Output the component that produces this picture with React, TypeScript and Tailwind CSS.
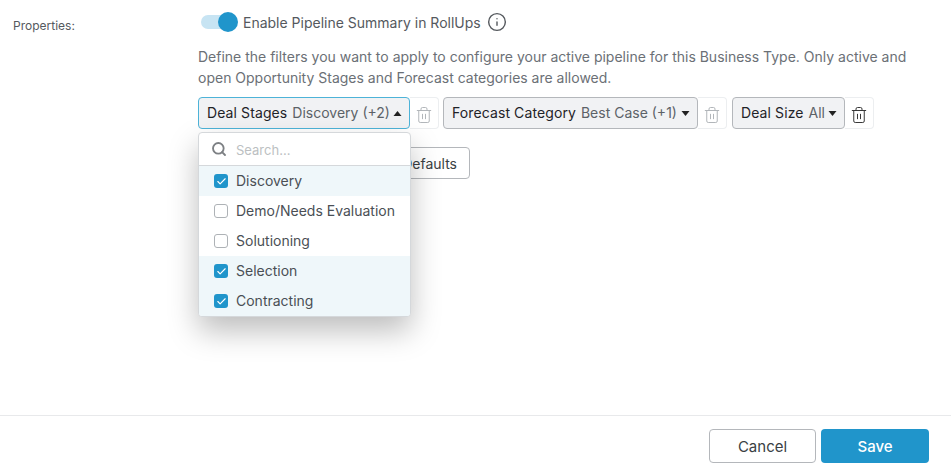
import React from 'react';
import { Check, Search, Trash2, Info } from 'lucide-react';

const stages = [
  { name: 'Discovery', checked: true },
  { name: 'Demo/Needs Evaluation', checked: false },
  { name: 'Solutioning', checked: false },
  { name: 'Selection', checked: true },
  { name: 'Contracting', checked: true },
];

const Caret: React.FC<{ up?: boolean }> = ({ up }) => (
  <svg width="9" height="5" viewBox="0 0 9 5" className={`shrink-0 text-[#222] ${up ? 'rotate-180' : ''}`}>
    <path d="M0.5 0h8L4.5 5z" fill="currentColor" />
  </svg>
);

const FilterChip: React.FC<{ label: string; value: string; className: string; open?: boolean; active?: boolean }> = ({ label, value, className, open, active }) => (
  <div className="flex items-center">
    <div
      className={`h-8 flex items-center pl-2 pr-[7px] justify-between rounded-[4px] border bg-[#f1f2f4] ${className} ${open ? 'border-[#4db3d8]' : 'border-[#b4b7bb]'}`}
    >
      <span className="flex items-center gap-[5px] whitespace-nowrap text-[14px] -mt-[2px]">
        <span className="text-[#1f2328] tracking-[0.1px]">{label}</span>
        <span className="text-[#5c6268]">{value}</span>
      </span>
      <Caret up={open} />
    </div>
    <div className="h-8 w-[29px] pr-[1px] flex items-center justify-center rounded-r-[4px] border border-l-0 border-[#eceef0] bg-white">
      <Trash2 size={18} strokeWidth={1.3} className={`mt-[3px] ${active ? 'text-[#333]' : 'text-[#b0b4b8]'}`} />
    </div>
  </div>
);

const StageRow: React.FC<{ name: string; checked: boolean }> = ({ name, checked }) => (
  <div className={`h-[30px] flex items-center pl-[15px] gap-[8px] ${checked ? 'bg-[#eff7fa]' : 'bg-white'}`}>
    {checked ? (
      <span className="w-[14px] h-[14px] rounded-[3px] bg-[#2095cb] flex items-center justify-center">
        <Check size={11} strokeWidth={2.5} className="text-white" />
      </span>
    ) : (
      <span className="w-[14px] h-[14px] rounded-[3px] border border-[#aeb2b6] bg-white" />
    )}
    <span className="text-[14px] text-[#4a4f55] whitespace-nowrap -mt-[2px]">{name}</span>
  </div>
);

export default function App() {
  return (
    <div className="w-[951px] h-[473px] flex flex-col bg-white overflow-hidden font-['Inter',sans-serif]">
      <div className="h-[415px] flex">
        <div className="w-[198px] pl-[13px] pt-[18px] text-[12px] leading-[15px] text-[#55595e]">Properties:</div>
        <div className="flex-1 pt-[12px] flex flex-col items-start">
          <div className="flex items-center h-5">
            <div className="relative w-9 h-[14px] ml-[3px] rounded-full bg-[#c7e4f3]">
              <span className="absolute -right-[1px] -top-[3px] w-5 h-5 rounded-full bg-[#2095cb]" />
            </div>
            <span className="ml-[6px] text-[14px] text-[#55595e] whitespace-nowrap">Enable Pipeline Summary in RollUps</span>
            <Info size={20} strokeWidth={1.7} className="ml-[6px] text-[#55595e]" />
          </div>
          <p className="mt-[14px] w-[730px] text-[14px] leading-[21px] text-[#6b7076]">
            Define the filters you want to apply to configure your active pipeline for this Business Type. Only active and open Opportunity Stages and Forecast categories are allowed.
          </p>
          <div className="relative mt-[9px] flex flex-col items-start">
            <div className="flex">
              <FilterChip label="Deal Stages" value="Discovery (+2)" className="w-[212px]" open />
              <div className="ml-[4px]">
                <FilterChip label="Forecast Category" value="Best Case (+1)" className="w-[255px]" />
              </div>
              <div className="ml-[5px]">
                <FilterChip label="Deal Size" value="All" className="w-[113px]" active />
              </div>
            </div>
            <button className="mt-[18px] w-[272px] h-8 pr-[12px] rounded-[4px] border border-[#b4b7bb] bg-white text-right text-[14px] text-[#3a3f44]">
              Reset to Defaults
            </button>
            <div className="absolute left-0 top-[35px] w-[213px] rounded-[4px] border border-[#d5d8db] bg-white overflow-hidden shadow-[0_14px_30px_rgba(0,0,0,0.26)]">
              <div className="h-[33px] flex items-center pl-[12px] gap-[9px] border-b border-[#d5d8db]">
                <Search size={16} strokeWidth={2.8} className="text-[#7d8084]" />
                <span className="text-[13px] text-[#bcbfc2] mt-[3px]">Search...</span>
              </div>
              {stages.map((s) => (
                <StageRow key={s.name} name={s.name} checked={s.checked} />
              ))}
            </div>
          </div>
        </div>
      </div>
      <div className="flex-1 border-t border-[#e8e9eb] flex justify-end gap-[5px] pt-[13px] pr-[22px]">
        <button className="w-[107px] h-[34px] pt-[2px] rounded-[4px] border border-[#b4b7bb] bg-white text-[15px] text-[#3a3f44]">Cancel</button>
        <button className="w-[108px] h-[34px] pt-[2px] rounded-[4px] bg-[#2095cb] text-[15px] text-white font-medium">Save</button>
      </div>
    </div>
  );
}
